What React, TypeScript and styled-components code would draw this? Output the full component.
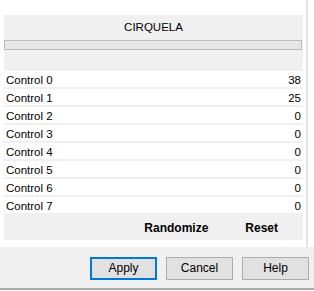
import React from 'react';
import styled, { createGlobalStyle } from 'styled-components';

const GlobalStyle = createGlobalStyle`
  html, body {
    margin: 0;
    padding: 0;
    background: #ffffff;
  }
  body {
    font-family: "Liberation Sans", Arial, sans-serif;
    font-size: 11px;
    color: #000;
  }
`;

const controls = [38, 25, 0, 0, 0, 0, 0, 0];

export default function App() {
  return (
    <>
      <GlobalStyle />
      <Window>
        <Upper>
          <Panel>
            <Title>CIRQUELA</Title>
            <Bar />
            <Rows>
              {controls.map((value, i) => (
                <Row key={i}>
                  <span>Control {i}</span>
                  <span>{value}</span>
                </Row>
              ))}
            </Rows>
            <Actions>
              <ActionLink>Randomize</ActionLink>
              <ActionLink>Reset</ActionLink>
            </Actions>
          </Panel>
          <Gutter />
        </Upper>
        <Footer>
          <Button $primary>Apply</Button>
          <Button>Cancel</Button>
          <Button>Help</Button>
        </Footer>
      </Window>
    </>
  );
}

const Window = styled.div`
  width: 314px;
  height: 291px;
  display: flex;
  flex-direction: column;
  background: #ffffff;
  overflow: hidden;
`;

const Upper = styled.div`
  height: 247px;
  display: flex;
  padding-left: 4px;
  box-sizing: border-box;
`;

const Panel = styled.div`
  width: 299px;
  margin-top: 15px;
  height: 225px;
  background: #f0f0f0;
  display: flex;
  flex-direction: column;
  box-sizing: border-box;
`;

const Gutter = styled.div`
  width: 2px;
  margin-left: 3px;
  height: 100%;
  background: #e3e3e3;
`;

const Title = styled.div`
  height: 24px;
  line-height: 25px;
  text-align: center;
  font-size: 11.5px;
`;

const Bar = styled.div`
  height: 10px;
  margin: 1px 1px 0 0;
  background: #e6e6e6;
  border: 1px solid #bcbcbc;
  box-sizing: border-box;
`;

const Rows = styled.div`
  margin-top: 21px;
  display: flex;
  flex-direction: column;
  gap: 2px;
`;

const Row = styled.div`
  height: 16px;
  background: #ffffff;
  display: flex;
  justify-content: space-between;
  align-items: center;
  padding: 1px 2px 0 2px;
  box-sizing: border-box;
  font-size: 11.5px;
`;

const Actions = styled.div`
  flex: 1;
  display: flex;
  justify-content: flex-end;
  align-items: center;
  gap: 37px;
  padding: 3px 25px 0 0;
`;

const ActionLink = styled.span`
  font-weight: bold;
  font-size: 12px;
`;

const Footer = styled.div`
  height: 41px;
  background: #f0f0f0;
  border-bottom: 2px solid #a9a9a9;
  display: flex;
  justify-content: flex-end;
  align-items: center;
  gap: 9px;
  padding-right: 5px;
`;

const Button = styled.button<{ $primary?: boolean }>`
  width: 67px;
  height: 23px;
  margin-top: 1px;
  background: #e1e1e1;
  border: ${(p) => (p.$primary ? '2px solid #0078d7' : '1px solid #adadad')};
  font-family: "Liberation Sans", Arial, sans-serif;
  font-size: 12px;
  color: #000;
  padding: 0;
  box-sizing: border-box;
`;
